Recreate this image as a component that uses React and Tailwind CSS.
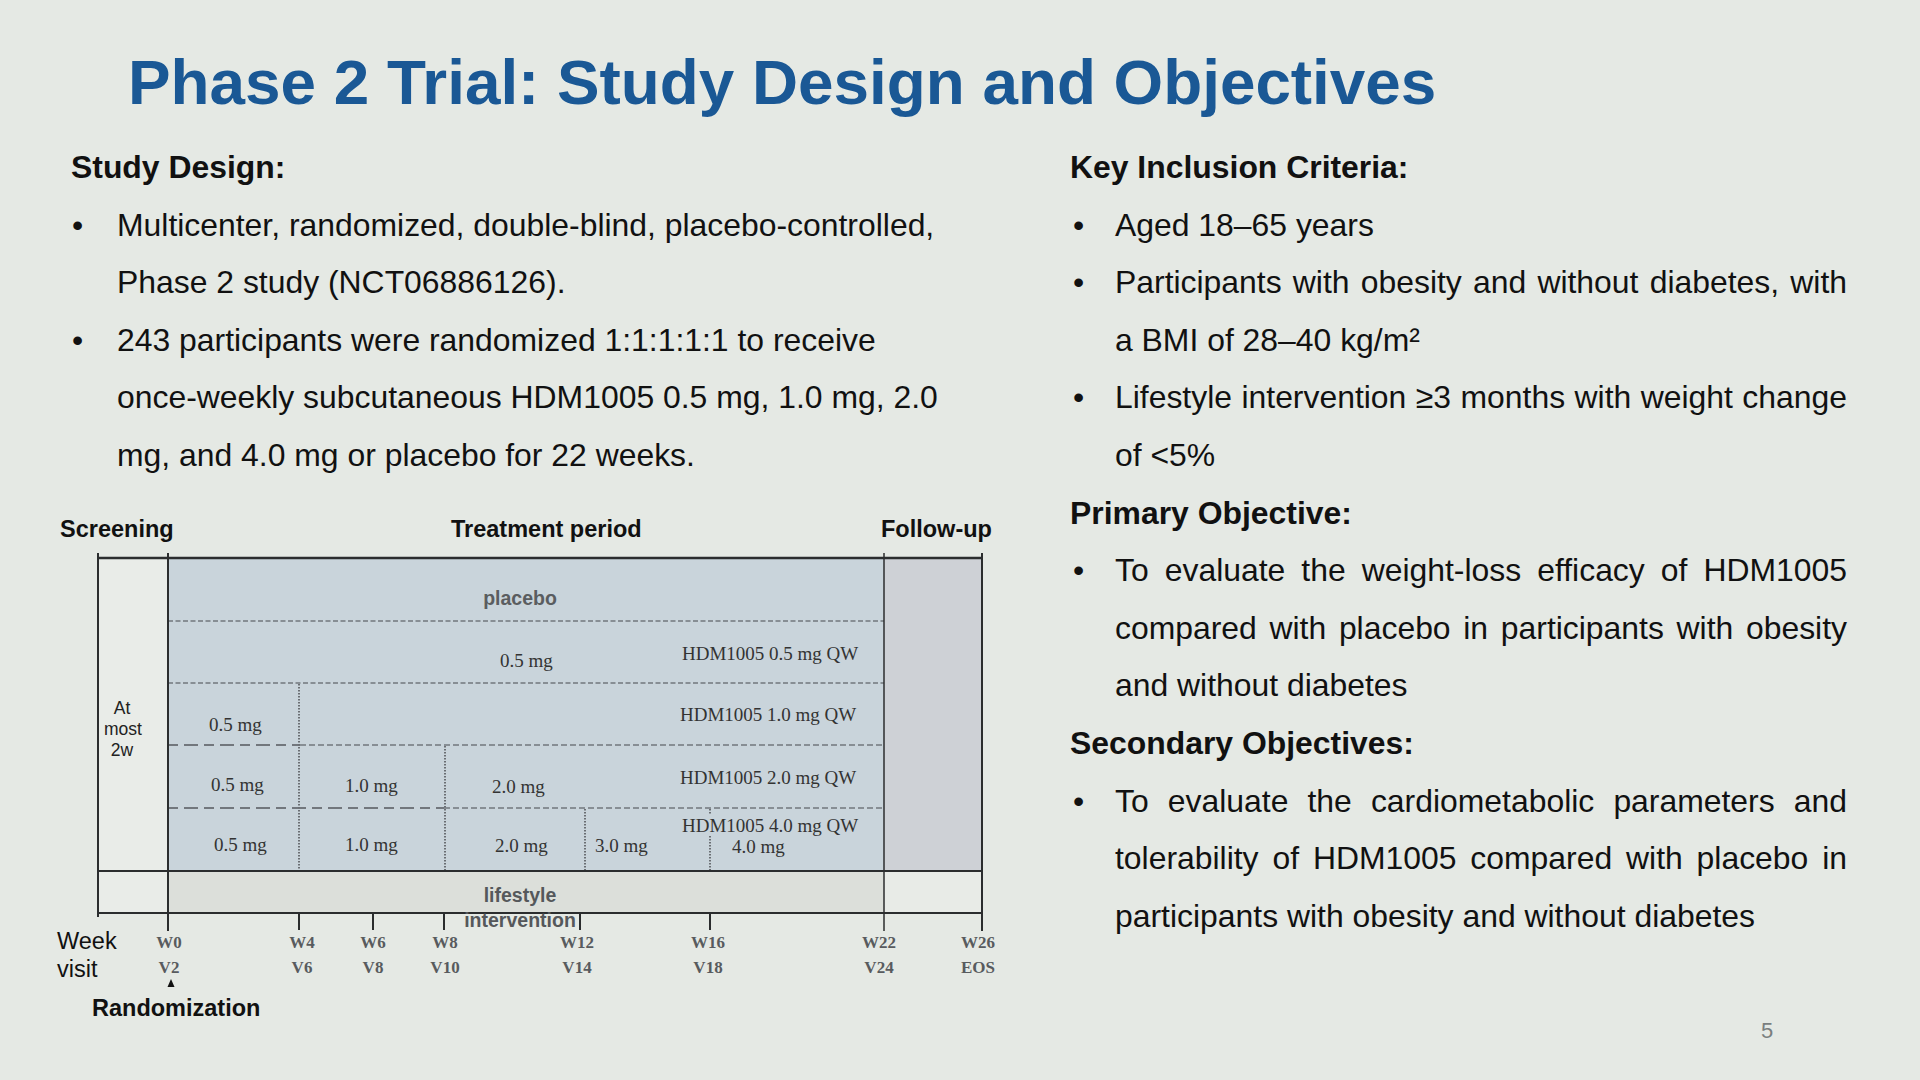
import React from "react";

const serif = "Liberation Serif, Times New Roman, serif";
const sans = "Liberation Sans, Arial, sans-serif";

function Bullet({ lines, justify = [] , right = false }) {
  return (
    <div className="flex">
      <span className={right ? "w-[45px] pl-[3px]" : "w-[46px] pl-[1px]"}>•</span>
      <div className={right ? "w-[732px]" : ""}>
        {lines.map((l, i) => (
          <div
            key={i}
            className={justify.includes(i) ? "text-justify [text-align-last:justify]" : ""}
          >
            {l}
          </div>
        ))}
      </div>
    </div>
  );
}

function Diagram() {
  const dash = "#72777d";
  const dot = "#6a6e73";
  const line = "#2b2d2e";
  const tms = (x, y, t, anchor = "start") => (
    <text x={x} y={y} fontFamily={serif} fontSize="19" fill="#333" textAnchor={anchor}>
      {t}
    </text>
  );
  const wk = (x, t1, t2) => (
    <g key={t1}>
      <text x={x} y={948} fontFamily={serif} fontSize="17" fontWeight="bold" fill="#585b5e" textAnchor="middle">
        {t1}
      </text>
      <text x={x} y={973} fontFamily={serif} fontSize="17" fontWeight="bold" fill="#585b5e" textAnchor="middle">
        {t2}
      </text>
    </g>
  );
  return (
    <svg
      width="970"
      height="540"
      viewBox="40 500 970 540"
      className="block mt-[15.4px]"
    >
      {/* fills */}
      <rect x="98" y="558" width="70" height="355" fill="#e9ece8" />
      <rect x="168" y="558" width="716" height="313" fill="#c9d4db" />
      <rect x="884" y="558" width="98" height="313" fill="#ced1d6" />
      <rect x="168" y="871" width="716" height="42" fill="#dcdfda" />
      <rect x="884" y="871" width="98" height="42" fill="#e8ebe7" />

      {/* dashed horizontal dividers */}
      <line x1="168" y1="621" x2="884" y2="621" stroke={dash} strokeWidth="1.6" strokeDasharray="5 2.5" />
      <line x1="168" y1="683" x2="884" y2="683" stroke={dash} strokeWidth="1.6" strokeDasharray="5 2.5" />
      <line x1="168" y1="745" x2="300" y2="745" stroke={dash} strokeWidth="1.8" strokeDasharray="10 6 14 6" />
      <line x1="300" y1="745" x2="884" y2="745" stroke={dash} strokeWidth="1.6" strokeDasharray="6 3" />
      <line x1="168" y1="808" x2="444" y2="808" stroke={dash} strokeWidth="1.8" strokeDasharray="10 6 14 6" />
      <line x1="444" y1="808" x2="884" y2="808" stroke={dash} strokeWidth="1.6" strokeDasharray="6 3" />

      {/* dotted verticals */}
      <line x1="299" y1="684" x2="299" y2="871" stroke={dot} strokeWidth="2" strokeDasharray="1.6 1.4" />
      <line x1="445" y1="746" x2="445" y2="871" stroke={dot} strokeWidth="2" strokeDasharray="1.6 1.4" />
      <line x1="585" y1="809" x2="585" y2="871" stroke={dot} strokeWidth="2" strokeDasharray="1.6 1.4" />
      <line x1="710" y1="809" x2="710" y2="815" stroke={dot} strokeWidth="2" strokeDasharray="1.6 1.4" />
      <line x1="710" y1="836" x2="710" y2="871" stroke={dot} strokeWidth="2" strokeDasharray="1.6 1.4" />

      {/* solid frame */}
      <line x1="98" y1="553" x2="98" y2="917" stroke={line} strokeWidth="2" />
      <line x1="168" y1="553" x2="168" y2="931" stroke={line} strokeWidth="2" />
      <line x1="884" y1="553" x2="884" y2="931" stroke={line} strokeWidth="1.5" />
      <line x1="982" y1="553" x2="982" y2="931" stroke={line} strokeWidth="2" />
      <line x1="97" y1="558" x2="983" y2="558" stroke={line} strokeWidth="2.5" />
      <line x1="97" y1="871" x2="983" y2="871" stroke={line} strokeWidth="2" />
      <line x1="97" y1="913" x2="983" y2="913" stroke={line} strokeWidth="2" />
      {[299, 373, 444, 580, 710].map((x) => (
        <line key={x} x1={x} y1="913" x2={x} y2="930" stroke={line} strokeWidth="2" />
      ))}

      {/* headers */}
      <text x="60" y="537" fontFamily={sans} fontSize="23.5" fontWeight="bold" fill="#111">Screening</text>
      <text x="451" y="537" fontFamily={sans} fontSize="23.5" fontWeight="bold" fill="#111">Treatment period</text>
      <text x="881" y="537" fontFamily={sans} fontSize="23.5" fontWeight="bold" fill="#111">Follow-up</text>

      {/* screening */}
      <text x="122" y="714" fontFamily={sans} fontSize="17.5" fill="#222" textAnchor="middle">At</text>
      <text x="123" y="735" fontFamily={sans} fontSize="17.5" fill="#222" textAnchor="middle">most</text>
      <text x="122" y="756" fontFamily={sans} fontSize="17.5" fill="#222" textAnchor="middle">2w</text>

      {/* rows */}
      <text x="520" y="605" fontFamily={sans} fontSize="19.5" fontWeight="bold" fill="#5a5d60" textAnchor="middle">placebo</text>
      {tms(500, 667, "0.5 mg")}
      {tms(682, 660, "HDM1005 0.5 mg QW")}
      {tms(680, 721, "HDM1005 1.0 mg QW")}
      {tms(209, 731, "0.5 mg")}
      {tms(211, 791, "0.5 mg")}
      {tms(345, 792, "1.0 mg")}
      {tms(492, 793, "2.0 mg")}
      {tms(680, 784, "HDM1005 2.0 mg QW")}
      {tms(214, 851, "0.5 mg")}
      {tms(345, 851, "1.0 mg")}
      {tms(495, 852, "2.0 mg")}
      {tms(595, 852, "3.0 mg")}
      {tms(732, 853, "4.0 mg")}
      {tms(682, 832, "HDM1005 4.0 mg QW")}

      {/* lifestyle */}
      <text x="520" y="902" fontFamily={sans} fontSize="19.5" fontWeight="bold" fill="#55585b" textAnchor="middle">lifestyle</text>
      <text x="520" y="927" fontFamily={sans} fontSize="19.5" fontWeight="bold" fill="#55585b" textAnchor="middle">intervention</text>

      {/* axis labels */}
      <text x="57" y="949" fontFamily={sans} fontSize="23.5" fill="#111">Week</text>
      <text x="57" y="977" fontFamily={sans} fontSize="23.5" fill="#111">visit</text>
      {wk(169, "W0", "V2")}
      {wk(302, "W4", "V6")}
      {wk(373, "W6", "V8")}
      {wk(445, "W8", "V10")}
      {wk(577, "W12", "V14")}
      {wk(708, "W16", "V18")}
      {wk(879, "W22", "V24")}
      {wk(978, "W26", "EOS")}
      <polygon points="171,979 167.5,987 174.5,987" fill="#111" />
      <text x="92" y="1016" fontFamily={sans} fontSize="23.5" fontWeight="bold" fill="#111">Randomization</text>
    </svg>
  );
}

export default function App() {
  return (
    <div className="w-[1920px] h-[1080px] overflow-hidden bg-[#e5e9e4] font-['Liberation_Sans',Arial,sans-serif] text-[#111]">
      <div className="h-[139px] pt-[45px] pl-[128px]">
        <h1 className="text-[63.8px] font-bold leading-[normal] text-[#1a5895] whitespace-nowrap">
          Phase 2 Trial: Study Design and Objectives
        </h1>
      </div>
      <div className="flex">
        <div className="w-[1070px] pl-[40px]">
          <div className="pl-[31px] text-[31.9px] leading-[57.6px]">
            <div className="font-bold">Study Design:</div>
            <Bullet
              lines={[
                "Multicenter, randomized, double-blind, placebo-controlled,",
                "Phase 2 study (NCT06886126).",
              ]}
            />
            <Bullet
              lines={[
                "243 participants were randomized 1:1:1:1:1 to receive",
                "once-weekly subcutaneous HDM1005 0.5 mg, 1.0 mg, 2.0",
                "mg, and 4.0 mg or placebo for 22 weeks.",
              ]}
            />
          </div>
          <Diagram />
        </div>
        <div className="w-[850px] text-[31.9px] leading-[57.6px]">
          <div className="font-bold">Key Inclusion Criteria:</div>
          <Bullet right lines={["Aged 18–65 years"]} />
          <Bullet
            right
            justify={[0]}
            lines={["Participants with obesity and without diabetes, with", "a BMI of 28–40 kg/m²"]}
          />
          <Bullet
            right
            justify={[0]}
            lines={["Lifestyle intervention ≥3 months with weight change", "of <5%"]}
          />
          <div className="font-bold">Primary Objective:</div>
          <Bullet
            right
            justify={[0, 1]}
            lines={[
              "To evaluate the weight-loss efficacy of HDM1005",
              "compared with placebo in participants with obesity",
              "and without diabetes",
            ]}
          />
          <div className="font-bold">Secondary Objectives:</div>
          <Bullet
            right
            justify={[0, 1]}
            lines={[
              "To evaluate the cardiometabolic parameters and",
              "tolerability of HDM1005 compared with placebo in",
              "participants with obesity and without diabetes",
            ]}
          />
          <div className="mt-[71px] pl-[691px] text-[22px] leading-[30px] text-[#7a7f7f]">5</div>
        </div>
      </div>
    </div>
  );
}
